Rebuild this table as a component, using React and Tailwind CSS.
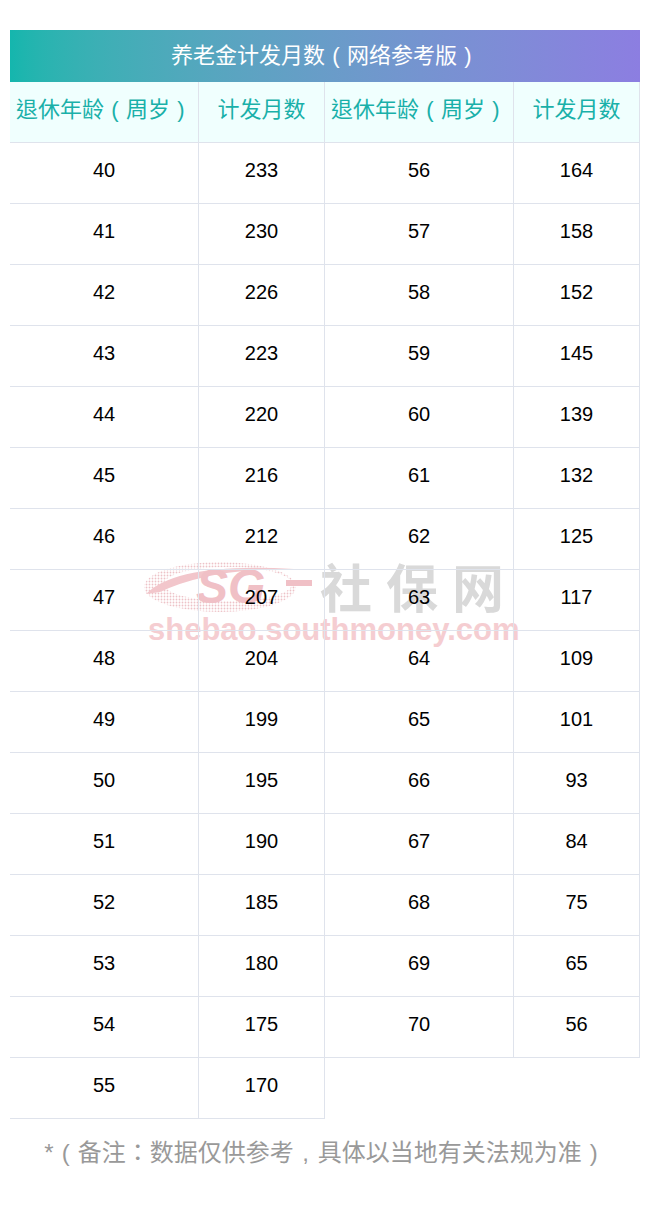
import React from "react";

const rows = [
  ["40", "233", "56", "164"],
  ["41", "230", "57", "158"],
  ["42", "226", "58", "152"],
  ["43", "223", "59", "145"],
  ["44", "220", "60", "139"],
  ["45", "216", "61", "132"],
  ["46", "212", "62", "125"],
  ["47", "207", "63", "117"],
  ["48", "204", "64", "109"],
  ["49", "199", "65", "101"],
  ["50", "195", "66", "93"],
  ["51", "190", "67", "84"],
  ["52", "185", "68", "75"],
  ["53", "180", "69", "65"],
  ["54", "175", "70", "56"],
  ["55", "170", "", ""],
];

const font = { fontFamily: '"Liberation Sans", "Noto Sans CJK TC", sans-serif' };

// full-width punctuation with the glyph centred in its box
const P = ({ c }) => <span className="inline-block w-[1em] text-center">{c}</span>;

// faint site watermark sitting behind the table cells
const Watermark = () => (
  <div className="absolute left-[126px] top-[526px] w-[400px] pointer-events-none select-none">
    <div className="flex items-center">
      <svg width="180" height="60" viewBox="0 0 180 60">
        <defs>
          <pattern id="dots" width="3" height="3" patternUnits="userSpaceOnUse">
            <circle cx="1.5" cy="1.5" r="0.9" fill="#e9b3b9" />
          </pattern>
        </defs>
        <ellipse cx="84" cy="31" rx="76" ry="25" fill="url(#dots)" opacity="0.8" />
        <ellipse cx="92" cy="28" rx="64" ry="17" fill="#fff" />
        <path d="M10 38 Q42 6 158 13 Q74 12 24 36 Z" fill="#f2c6cb" />
        <text x="60" y="47" fontSize="48" fontWeight="bold" fontStyle="italic" fill="#f0c0c6" fontFamily="Liberation Sans, sans-serif">SG</text>
        <rect x="150" y="24" width="26" height="6" fill="#f0c0c6" />
      </svg>
      <div className="text-[52px] leading-none font-bold text-[#d9d9d9] tracking-[14px] ml-[4px]" style={{ fontFamily: '"Noto Sans CJK SC", serif' }}>
        社保网
      </div>
    </div>
    <div className="text-[31px] leading-none font-bold text-[#f5cdd1] mt-[-2px] ml-[12px]" style={{ fontFamily: '"Liberation Sans", sans-serif' }}>
      shebao.southmoney.com
    </div>
  </div>
);

const AgeHead = () => (
  <span>
    退休年龄<P c="(" />周岁<P c=")" />
  </span>
);

export default function App() {
  const heads = [<AgeHead />, "计发月数", <AgeHead />, "计发月数"];
  return (
    <div className="w-[650px] h-[1210px] bg-white pt-[30px] px-[10px]" style={font}>
      <div className="relative">
        <Watermark />
        <div className="relative">
          <div className="h-[52px] pb-[2px] flex items-center justify-center text-white text-[22px] bg-gradient-to-r from-[#14b6ad] to-[#8c7ee1]">
            养老金计发月数<P c="(" />网络参考版<P c=")" />
          </div>
          <div className="grid grid-cols-[189px_126px_189px_126px] bg-[#f0fffe] text-[#19b0a9] text-[22px]">
            {heads.map((h, i) => (
              <div key={i} className="h-[61px] pb-[5px] flex items-center justify-center border-r border-b border-[#dfe3ec]">
                {h}
              </div>
            ))}
          </div>
          {rows.map((r, ri) => (
            <div key={ri} className="grid grid-cols-[189px_126px_189px_126px] text-[20px] text-black">
              {r.map((c, ci) =>
                c === "" ? (
                  <div key={ci} />
                ) : (
                  <div key={ci} className="h-[61px] pb-[6px] flex items-center justify-center border-r border-b border-[#dfe3ec]">
                    {c}
                  </div>
                )
              )}
            </div>
          ))}
        </div>
      </div>
      <div className="text-center text-[#999999] text-[24px] mt-[16px]">
        *<P c="(" />备注：数据仅供参考<P c="," />具体以当地有关法规为准<P c=")" />
      </div>
    </div>
  );
}
